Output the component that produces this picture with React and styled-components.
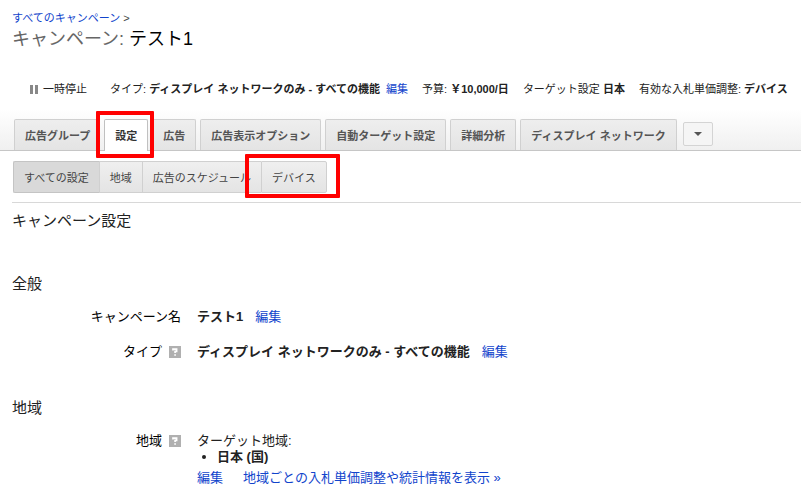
import React from "react";
import styled, { createGlobalStyle } from "styled-components";

const GlobalStyle = createGlobalStyle`
  * { box-sizing: border-box; }
  body {
    margin: 0;
    background: #fff;
    color: #222;
    font-family: "Liberation Sans", "Noto Sans CJK JP", sans-serif;
    font-size: 13px;
    line-height: 16px;
  }
  button { font-family: inherit; }
`;

const Page = styled.div`
  overflow: hidden;
  white-space: nowrap;
`;

const Header = styled.header`
  padding: 10px 12px 0;
`;

const Link = styled.a`
  color: #14c;
  text-decoration: none;
`;

const Breadcrumb = styled.nav`
  font-size: 11px;
  color: #444;
`;

const Title = styled.h1`
  margin: 0;
  font-size: 18px;
  line-height: 26px;
  font-weight: normal;
  color: #000;
`;

const TitleLabel = styled.span`
  color: #666;
`;

const Summary = styled.div`
  display: flex;
  align-items: center;
  gap: 14px;
  margin-top: 29px;
  padding-left: 18px;
  font-size: 11px;
`;

const StatusButton = styled.button`
  display: flex;
  align-items: center;
  gap: 5px;
  margin-right: 9px;
  padding: 0;
  border: 0;
  background: none;
  color: inherit;
  font-size: 11px;
  line-height: 16px;
`;

const Fact = styled.span`
  a { margin-left: 3px; }
`;

const TabBar = styled.nav`
  display: flex;
  align-items: flex-end;
  gap: 4px;
  margin-top: 12px;
  height: 42px;
  padding: 0 14px;
  border-bottom: 1px solid #c6c6c6;
  background: linear-gradient(#fff, #f0f0f0);
`;

const Tab = styled.button`
  position: relative;
  flex: none;
  height: 31px;
  padding: 0 10px;
  border: 1px solid ${(p) => (p.$active ? "#c0c0c0" : "#d0d0d0")};
  border-bottom: 0;
  border-radius: 2px 2px 0 0;
  background: ${(p) => (p.$active ? "#fff" : "linear-gradient(#eee, #e4e4e4)")};
  color: #555;
  font-size: 11px;
  font-weight: bold;
  ${(p) => p.$active && "height: 32px; margin-bottom: -1px; padding-bottom: 1px; color: #333;"}
  &:first-child { padding: 0 9px 0 10px; }
`;

const MoreButton = styled.button`
  display: flex;
  flex: none;
  align-items: center;
  justify-content: center;
  width: 30px;
  height: 24px;
  margin: 0 0 4px 2px;
  padding: 0;
  border: 1px solid #d4d4d4;
  border-radius: 2px;
  background: #f5f5f5;
`;

const SubTabs = styled.div`
  display: flex;
  padding: 10px 13px 9px;
`;

const SubTab = styled.button`
  position: relative;
  flex: none;
  height: 32px;
  padding: 0 10px;
  border: 1px solid ${(p) => (p.$active ? "#c4c4c4" : "#d0d0d0")};
  border-right-width: 0;
  background: ${(p) => (p.$active ? "#d9d9d9" : "linear-gradient(#efefef, #e4e4e4)")};
  color: #444;
  font-size: 11px;
  &:first-child { border-radius: 2px 0 0 2px; }
  &:last-child { border-right-width: 1px; border-radius: 0 2px 2px 0; }
`;

const Highlight = styled.span`
  position: absolute;
  z-index: 1;
  inset: ${(p) => p.$inset};
  border: 4px solid #f00;
  border-radius: 1px;
  pointer-events: none;
`;

const Main = styled.main`
  margin-left: 12px;
  padding-top: 8px;
  border-top: 1px solid #d8d8d8;
`;

const PageHeading = styled.h2`
  margin: 0 0 43px;
  font-size: 15px;
  line-height: 20px;
  font-weight: normal;
`;

const Section = styled.section`
  margin-bottom: 38px;
  &:last-child { margin-bottom: 0; }
`;

const SectionHeading = styled.h3`
  margin: 0 0 15px;
  font-size: 15px;
  line-height: 20px;
  font-weight: normal;
`;

const Settings = styled.dl`
  display: grid;
  grid-template-columns: 169px 1fr;
  gap: 19px 16px;
  margin: 0;
`;

const Term = styled.dt`
  display: flex;
  justify-content: flex-end;
  align-items: center;
  gap: 7px;
  height: 16px;
  color: #000;
`;

const Value = styled.dd`
  margin: 0;
`;

const ValueLine = styled.div`
  display: flex;
  gap: ${(p) => p.$gap}px;
`;

const Locations = styled.ul`
  margin: 0 0 5px;
  padding-left: 20px;
  font-weight: bold;
`;

const HelpButton = styled.button`
  display: flex;
  padding: 0;
  border: 0;
  background: none;
`;

function Help({ label }) {
  return (
    <HelpButton aria-label={label}>
      <svg width="12" height="12" viewBox="0 0 12 12">
        <rect width="12" height="12" fill="#b0b0b0" />
        <path d="M4 4.6V3.1H7.6V5.4H6.1V7.1M6.1 8.2V9.8" fill="none" stroke="#fff" strokeWidth="1.7" />
      </svg>
    </HelpButton>
  );
}

const tabs = [
  "広告グループ",
  "設定",
  "広告",
  "広告表示オプション",
  "自動ターゲット設定",
  "詳細分析",
  "ディスプレイ ネットワーク",
];

const subTabs = ["すべての設定", "地域", "広告のスケジュール", "デバイス"];

export default function App() {
  return (
    <Page>
      <GlobalStyle />
      <Header>
        <Breadcrumb>
          <Link href="#campaigns">すべてのキャンペーン</Link> &gt;
        </Breadcrumb>
        <Title>
          <TitleLabel>キャンペーン:</TitleLabel> テスト1
        </Title>
        <Summary>
          <StatusButton>
            <svg width="8" height="9" viewBox="0 0 8 9">
              <path d="M0 0h3v9H0zM5 0h3v9H5z" fill="#888" />
            </svg>
            一時停止
          </StatusButton>
          <Fact>
            タイプ: <b>ディスプレイ ネットワークのみ - すべての機能</b>{" "}
            <Link href="#type">編集</Link>
          </Fact>
          <Fact>
            予算: <b>￥10,000/日</b>
          </Fact>
          <Fact>
            ターゲット設定 <b>日本</b>
          </Fact>
          <Fact>
            有効な入札単価調整: <b>デバイス</b>
          </Fact>
        </Summary>
      </Header>

      <TabBar>
        {tabs.map((name) => (
          <Tab key={name} $active={name === "設定"}>
            {name}
            {name === "設定" && <Highlight $inset="-9px -7px -7px -9px" />}
          </Tab>
        ))}
        <MoreButton aria-label="その他のタブ">
          <svg width="8" height="4" viewBox="0 0 8 4">
            <path d="M0 0h8L4 4z" fill="#555" />
          </svg>
        </MoreButton>
      </TabBar>

      <SubTabs>
        {subTabs.map((name) => (
          <SubTab key={name} $active={name === "すべての設定"}>
            {name}
            {name === "デバイス" && <Highlight $inset="-8px -14px -6px -17px" />}
          </SubTab>
        ))}
      </SubTabs>

      <Main>
        <PageHeading>キャンペーン設定</PageHeading>
        <Section>
          <SectionHeading>全般</SectionHeading>
          <Settings>
            <Term>キャンペーン名</Term>
            <Value>
              <ValueLine $gap={12}>
                <b>テスト1</b>
                <Link href="#name">編集</Link>
              </ValueLine>
            </Value>
            <Term>
              タイプ
              <Help label="タイプのヘルプ" />
            </Term>
            <Value>
              <ValueLine $gap={12}>
                <b>ディスプレイ ネットワークのみ - すべての機能</b>
                <Link href="#type">編集</Link>
              </ValueLine>
            </Value>
          </Settings>
        </Section>
        <Section>
          <SectionHeading>地域</SectionHeading>
          <Settings>
            <Term>
              地域
              <Help label="地域のヘルプ" />
            </Term>
            <Value>
              ターゲット地域:
              <Locations>
                <li>日本 (国)</li>
              </Locations>
              <ValueLine $gap={20}>
                <Link href="#location">編集</Link>
                <Link href="#stats">地域ごとの入札単価調整や統計情報を表示 »</Link>
              </ValueLine>
            </Value>
          </Settings>
        </Section>
      </Main>
    </Page>
  );
}
